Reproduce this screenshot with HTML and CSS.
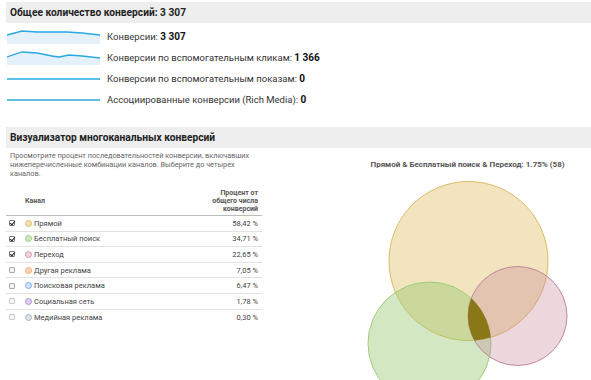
FILE: index.html
```html
<!DOCTYPE html>
<html>
<head>
<meta charset="utf-8">
<link rel="stylesheet" href="styles.css">
</head>
<body>
<div class="page">
  <section class="summary">
    <div class="bar"><h2>Общее количество конверсий: 3 307</h2></div>
    <ul class="metrics">
      <li>
        <svg class="spark" viewBox="0 0 93 14" width="93" height="14">
          <path d="M0 5 L15 1 L30 2 L45 2 L60 2 L75 3 L93 5 L93 14 L0 14 Z" fill="#e4f1fa"/>
          <path d="M0 5 L15 1 L30 2 L45 2 L60 2 L75 3 L93 5" fill="none" stroke="#2aa8e0" stroke-width="1.3"/>
        </svg>
        <span>Конверсии: <b>3 307</b></span>
      </li>
      <li>
        <svg class="spark" viewBox="0 0 93 14" width="93" height="14">
          <path d="M0 6 L15 1 L30 2 L45 5 L52 6 L62 4 L75 5 L93 7 L93 14 L0 14 Z" fill="#e4f1fa"/>
          <path d="M0 6 L15 1 L30 2 L45 5 L52 6 L62 4 L75 5 L93 7" fill="none" stroke="#2aa8e0" stroke-width="1.3"/>
        </svg>
        <span>Конверсии по вспомогательным кликам: <b>1 366</b></span>
      </li>
      <li>
        <svg class="spark" viewBox="0 0 93 14" width="93" height="14">
          <path d="M0 7 L93 7" fill="none" stroke="#2aa8e0" stroke-width="1.3"/>
        </svg>
        <span>Конверсии по вспомогательным показам: <b>0</b></span>
      </li>
      <li>
        <svg class="spark" viewBox="0 0 93 14" width="93" height="14">
          <path d="M0 7 L93 7" fill="none" stroke="#2aa8e0" stroke-width="1.3"/>
        </svg>
        <span>Ассоциированные конверсии (Rich Media): <b>0</b></span>
      </li>
    </ul>
  </section>

  <section class="visual">
    <div class="bar"><h2>Визуализатор многоканальных конверсий</h2></div>
    <div class="cols">
      <div class="left">
        <p class="desc">Просмотрите процент последовательностей конверсии, включавших нижеперечисленные комбинации каналов. Выберите до четырех каналов.</p>
        <table class="channels">
          <thead>
            <tr><th class="c-chk"></th><th class="c-name">Канал</th><th class="c-pct">Процент от<br>общего числа<br>конверсий</th></tr>
          </thead>
          <tbody>
            <tr><td class="c-chk"><span class="box on"></span></td><td class="c-name"><span class="dot yellow"></span>Прямой</td><td class="c-pct">58,42 %</td></tr>
            <tr><td class="c-chk"><span class="box on"></span></td><td class="c-name"><span class="dot green"></span>Бесплатный поиск</td><td class="c-pct">34,71 %</td></tr>
            <tr><td class="c-chk"><span class="box on"></span></td><td class="c-name"><span class="dot pink"></span>Переход</td><td class="c-pct">22,65 %</td></tr>
            <tr><td class="c-chk"><span class="box"></span></td><td class="c-name"><span class="dot orange"></span>Другая реклама</td><td class="c-pct">7,05 %</td></tr>
            <tr><td class="c-chk"><span class="box"></span></td><td class="c-name"><span class="dot blue"></span>Поисковая реклама</td><td class="c-pct">6,47 %</td></tr>
            <tr><td class="c-chk"><span class="box light"></span></td><td class="c-name"><span class="dot violet"></span>Социальная сеть</td><td class="c-pct">1,78 %</td></tr>
            <tr><td class="c-chk"><span class="box light"></span></td><td class="c-name"><span class="dot grey"></span>Медийная реклама</td><td class="c-pct">0,30 %</td></tr>
          </tbody>
        </table>
      </div>
      <div class="right">
        <p class="venn-title">Прямой &amp; Бесплатный поиск &amp; Переход: 1.75% (58)</p>
        <svg class="venn" viewBox="0 0 247 210" width="247" height="210">
          <defs>
            <clipPath id="cy"><circle cx="124.5" cy="88" r="79.5"/></clipPath>
            <clipPath id="cg"><circle cx="85.5" cy="170.5" r="61.5"/></clipPath>
          </defs>
          <circle cx="124.5" cy="88" r="79.5" fill="rgba(226,196,110,0.45)" stroke="#dcbb63" stroke-width="1"/>
          <circle cx="85.5" cy="170.5" r="61.5" fill="rgba(150,200,110,0.42)" stroke="#9fcd80" stroke-width="1"/>
          <circle cx="173.5" cy="143" r="49.5" fill="rgba(195,130,150,0.32)" stroke="#c0899b" stroke-width="1"/>
          <g clip-path="url(#cy)">
            <g clip-path="url(#cg)">
              <circle cx="173.5" cy="143" r="49.5" fill="#8a7718"/>
            </g>
          </g>
        </svg>
      </div>
    </div>
  </section>
</div>
</body>
</html>
```

FILE: styles.css
```css
* { box-sizing: border-box; }
html, body { margin: 0; padding: 0; background: #fff; }
body {
  font-family: Roboto, "Liberation Sans", Arial, sans-serif;
  color: #222;
  width: 591px;
  height: 380px;
  overflow: hidden;
}
.page { padding: 2px 0 0 6px; }
.bar {
  background: #eeeeee;
  height: 21px;
  display: flex;
  align-items: center;
  padding-left: 4px;
}
.bar h2 {
  margin: 0;
  font-size: 10.2px;
  font-weight: 700;
  color: #222;
}
.metrics {
  list-style: none;
  margin: 0;
  padding: 3px 0 0 1px;
}
.metrics li {
  display: flex;
  align-items: center;
  gap: 7px;
  height: 21px;
  font-size: 9.5px;
  color: #333;
}
.metrics li b { color: #111; font-weight: 700; font-size: 10px; }
.spark { display: block; flex: none; }
.visual { margin-top: 17px; }
.cols { display: flex; }
.left { width: 256px; flex: none; }
.desc {
  margin: 3px 0 0 4px;
  font-size: 7.3px;
  line-height: 9px;
  color: #666;
  width: 246px;
}
.channels {
  margin-top: 11px;
  width: 256px;
  border-collapse: collapse;
  font-size: 7.5px;
  color: #444;
}
.channels th {
  font-weight: 700;
  color: #555;
  font-size: 7px;
  line-height: 8px;
  padding: 0 4px 2px 0;
  border-bottom: 1px solid #bbb;
  vertical-align: middle;
}
.channels th.c-name { text-align: left; }
.channels td {
  height: 15.6px;
  border-bottom: 1px solid #e3e3e3;
  padding: 0 4px 0 0;
  vertical-align: middle;
}
.channels tbody tr:last-child td { border-bottom: none; }
.c-chk { width: 19px; padding-left: 2px !important; }
.c-name { text-align: left; white-space: nowrap; }
.c-pct { text-align: right; }
.box {
  display: block;
  width: 6px;
  height: 6px;
  margin-left: 1px;
  border: 1px solid #aaa;
  border-radius: 1px;
  background: #f4f4f4;
  position: relative;
}
.box.light { border-color: #ccc; }
.box.on { background: #fff; border-color: #777; }
.box.on::after {
  content: "";
  position: absolute;
  left: 1px;
  top: -1px;
  width: 2px;
  height: 4px;
  border: solid #222;
  border-width: 0 1.2px 1.2px 0;
  transform: rotate(40deg);
}
.dot {
  display: inline-block;
  width: 7px;
  height: 7px;
  border-radius: 50%;
  margin-right: 2px;
  vertical-align: -1px;
  border: 1px solid;
}
.dot.yellow { background: #f2e2b0; border-color: #dcc06a; }
.dot.green { background: #cde8bf; border-color: #9dcc80; }
.dot.pink { background: #f0d2dc; border-color: #d19aae; }
.dot.orange { background: #fad6b8; border-color: #f0ae7a; }
.dot.blue { background: #cfe2f8; border-color: #7faee8; }
.dot.violet { background: #e0d0f0; border-color: #b090d8; }
.dot.grey { background: #dde3ea; border-color: #a9b3bf; }
.right {
  flex: 1;
  display: flex;
  flex-direction: column;
  align-items: center;
  padding-left: 82px;
}
.venn-title {
  margin: 12px 0 0 0;
  font-size: 8px;
  font-weight: 700;
  color: #555;
  white-space: nowrap;
}
.venn { display: block; margin-top: 4px; }
```
